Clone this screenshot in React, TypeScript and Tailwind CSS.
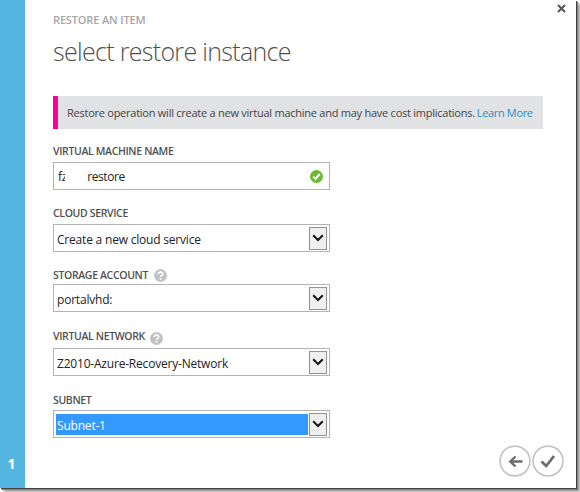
import type { ReactNode } from 'react';

function HelpIcon({ className }: { className: string }) {
  return (
    <svg className={className} width="13" height="13" viewBox="0 0 13 13">
      <circle cx="6.5" cy="6.5" r="6.5" fill="#c3c3c3" />
      <path d="M4.3 5C4.3 2.4 8.7 2.4 8.7 4.9C8.7 6.3 6.6 6.3 6.6 8" fill="none" stroke="#fff" strokeWidth="1.6" />
      <rect x="5.8" y="9" width="1.6" height="1.6" fill="#fff" />
    </svg>
  );
}

function Label({ children, className }: { children: ReactNode; className: string }) {
  return (
    <div
      className={`flex h-4 items-center whitespace-nowrap text-[10.5px] leading-4 font-semibold tracking-[-0.35px] text-[#505050] ${className}`}
    >
      {children}
    </div>
  );
}

function Select({ children, className, selected }: { children: ReactNode; className: string; selected?: boolean }) {
  return (
    <div className={`flex h-7 w-[277px] items-center gap-px border border-[#b4b4b4] pr-[2px] pl-[2px] ${className}`}>
      <div
        className={`flex h-[21px] w-[253px] items-center pt-[3px] pl-px text-[12px] leading-[18px] tracking-[-0.2px] whitespace-nowrap ${
          selected ? 'bg-[#3399ff] text-white' : 'text-[#222]'
        }`}
      >
        {children}
      </div>
      <div className="flex h-[23px] w-[18px] shrink-0 items-center justify-center border border-[#929292] bg-[#efefef]">
        <svg width="12" height="8" viewBox="0 0 12 8">
          <path d="M1.2 1.2L6 6L10.8 1.2" fill="none" stroke="#151515" strokeWidth="2" />
        </svg>
      </div>
    </div>
  );
}

export default function App() {
  return (
    <div className="h-[492px] w-[580px] overflow-hidden bg-white font-['Open_Sans','Noto_Sans',sans-serif]">
      <div className="flex h-[488px] w-[576px] bg-white shadow-[1px_1px_0_#444,2px_2px_1px_#808080,4px_4px_2px_#a8a8a8]">
        <aside className="flex w-[25px] items-end justify-center bg-[#53b5e0] pr-[2px] pb-[14px] text-[14px] leading-5 font-bold text-white">
          1
        </aside>
        <main className="relative flex-1 pt-3 pl-7">
          <svg className="absolute top-[4px] right-[10px]" width="9" height="9" viewBox="0 0 9 9">
            <path d="M1 1L8 8M8 1L1 8" stroke="#555" strokeWidth="2" />
          </svg>
          <div className="h-4 text-[11px] leading-4 font-semibold tracking-[-0.15px] text-[#a6a6a6]">RESTORE AN ITEM</div>
          <h1 className="mt-[5px] h-9 text-[25px] leading-9 font-light tracking-[-0.69px] whitespace-nowrap text-[#505050]">
            select restore instance
          </h1>
          <div className="mt-[27px] flex h-[33px] w-[490px] items-center border-l-[5px] border-[#ff0097] bg-[#e1e2e4] pt-[2px] pl-[9px] text-[11px] tracking-[-0.25px] whitespace-nowrap text-[#444]">
            <span>Restore operation will create a new virtual machine and may have cost implications.</span>
            <a className="ml-[2px] tracking-[-0.35px] text-[#2f8cc8]">Learn More</a>
          </div>

          <Label className="mt-[14px]">VIRTUAL MACHINE NAME</Label>
          <div className="mt-[3px] flex h-7 w-[277px] items-center border border-[#b4b4b4] pr-[6px] pl-[4px] text-[12px] text-[#222]">
            <span className="pt-px tracking-[-0.26px] whitespace-nowrap">fz</span>
            <span className="relative -ml-[2px] h-5 w-[22px] bg-white" />
            <span className="pt-px tracking-[-0.4px]">restore</span>
            <svg className="ml-auto" width="13" height="13" viewBox="0 0 13 13">
              <circle cx="6.5" cy="6.5" r="6.5" fill="#6cb92d" />
              <path d="M3.2 6.6L5.6 9L9.7 4" fill="none" stroke="#fff" strokeWidth="2" />
            </svg>
          </div>

          <Label className="mt-[15px]">CLOUD SERVICE</Label>
          <Select className="mt-[3px]">Create a new cloud service</Select>

          <Label className="mt-[15px]">
            STORAGE ACCOUNT
            <HelpIcon className="ml-[6px]" />
          </Label>
          <Select className="mt-px">portalvhd:</Select>

          <Label className="mt-[16px]">
            VIRTUAL NETWORK
            <HelpIcon className="mt-[5px] ml-[5px]" />
          </Label>
          <Select className="mt-[4px]">Z2010-Azure-Recovery-Network</Select>

          <Label className="mt-[16px]">SUBNET</Label>
          <Select className="mt-[2px]" selected>
            Subnet-1
          </Select>

          <div className="mt-[7px] ml-[446px] flex gap-px">
            <svg width="32" height="32" viewBox="0 0 32 32">
              <circle cx="16" cy="16" r="14.9" fill="#fff" stroke="#c4c4c4" strokeWidth="1.7" />
              <path d="M23.5 16.5H11.5M16.5 11.5L11.3 16.5L16.5 21.5" fill="none" stroke="#6d6d6d" strokeWidth="2.4" />
            </svg>
            <svg width="32" height="32" viewBox="0 0 32 32">
              <circle cx="16" cy="16" r="14.9" fill="#fff" stroke="#c4c4c4" strokeWidth="1.7" />
              <path d="M9.5 16.5L14.2 21L22 11" fill="none" stroke="#6d6d6d" strokeWidth="2.8" />
            </svg>
          </div>
        </main>
      </div>
    </div>
  );
}
